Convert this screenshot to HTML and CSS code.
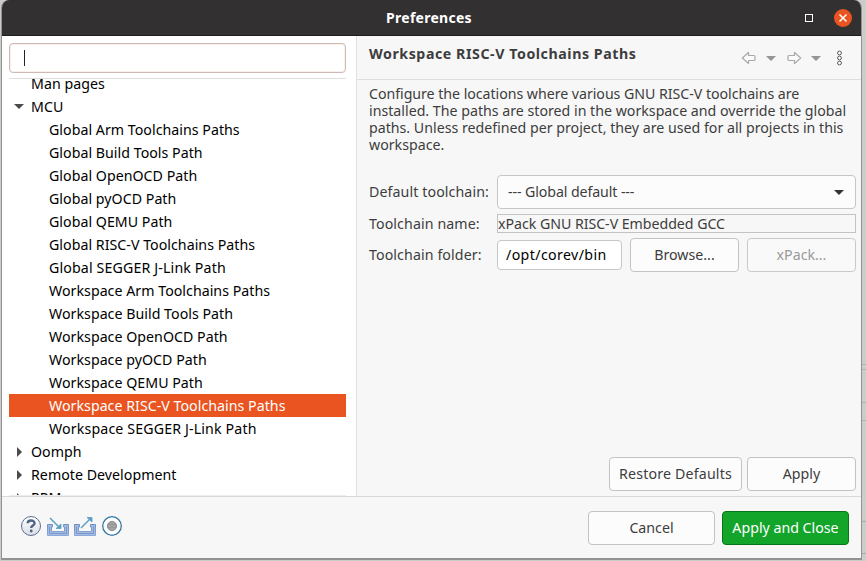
FILE: index.html
```html
<!DOCTYPE html>
<html lang="en">
<head>
<meta charset="utf-8">
<title>Preferences</title>
<link rel="stylesheet" href="styles.css">
</head>
<body>
<div class="window">
  <header class="titlebar">
    <h1>Preferences</h1>
    <div class="controls">
      <span class="maximize"></span>
      <svg class="close" width="18" height="18" viewBox="0 0 18 18"><circle cx="9" cy="9" r="9" fill="#e95420"/><path d="M5.5 5.5l7 7M12.500 5.500l-7 7" stroke="#fff" stroke-width="1.5"/></svg>
    </div>
  </header>
  <main class="panes">
    <aside class="sidebar">
      <div class="search"><span class="caret"></span></div>
      <div class="tree">
        <ul>
          <li class="top">Man pages</li>
          <li class="top open">MCU</li>
          <li>Global Arm Toolchains Paths</li>
          <li>Global Build Tools Path</li>
          <li>Global OpenOCD Path</li>
          <li>Global pyOCD Path</li>
          <li>Global QEMU Path</li>
          <li>Global RISC-V Toolchains Paths</li>
          <li class="segger">Global SEGGER J-Link Path</li>
          <li>Workspace Arm Toolchains Paths</li>
          <li>Workspace Build Tools Path</li>
          <li>Workspace OpenOCD Path</li>
          <li>Workspace pyOCD Path</li>
          <li>Workspace QEMU Path</li>
          <li class="selected">Workspace RISC-V Toolchains Paths</li>
          <li class="segger">Workspace SEGGER J-Link Path</li>
          <li class="top closed">Oomph</li>
          <li class="top closed">Remote Development</li>
          <li class="top closed">RPM</li>
        </ul>
      </div>
    </aside>
    <section class="page">
      <div class="heading">
        <h2>Workspace RISC-V Toolchains Paths</h2>
        <svg class="nav" width="104" height="18" viewBox="0 0 104 18">
          <g fill="#fafafa" stroke="#a9a9a9" stroke-width="1.2" stroke-linejoin="round">
            <path d="M1.300 9L7.500 3.500V6.500H13Q14 6.500 14 7.500V10.500Q14 11.500 13 11.500H7.500V14.500Z"/>
            <path d="M59.700 9L53.500 3.500V6.500H48Q47 6.500 47 7.500V10.500Q47 11.500 48 11.500H53.500V14.500Z"/>
          </g>
          <path d="M25 7h10l-5 5zM70 7h10l-5 5z" fill="#959595"/>
          <g fill="#fff" stroke="#555" stroke-width="1"><circle cx="98.500" cy="4" r="1.900"/><circle cx="98.500" cy="9" r="1.900"/><circle cx="98.500" cy="14" r="1.900"/></g>
        </svg>
      </div>
      <p class="description"><span class="tight">Configure the locations where various GNU RISC-V toolchains are</span><br>installed. The paths are stored in the workspace and override the global<br>paths. Unless redefined per project, they are used for all projects in this<br>workspace.</p>
      <div class="form">
        <label>Default toolchain:</label>
        <div class="select"><span>--- Global default ---</span><i></i></div>
        <label>Toolchain name:</label>
        <div class="readonly">xPack GNU RISC-V Embedded GCC</div>
        <label>Toolchain folder:</label>
        <div class="folder">
          <div class="input">/opt/corev/bin</div>
          <button>Browse...</button>
          <button disabled>xPack...</button>
        </div>
      </div>
      <div class="page-actions">
        <button class="restore">Restore Defaults</button>
        <button>Apply</button>
      </div>
    </section>
  </main>
  <footer class="footer">
    <svg class="tools" width="104" height="22" viewBox="0 0 104 22">
      <defs>
        <linearGradient id="disc" x2="0" y2="1"><stop stop-color="#fff"/><stop offset="1" stop-color="#d9dde5"/></linearGradient>
        <linearGradient id="tray" x2="0" y2="1"><stop stop-color="#6f8fc4"/><stop offset="1" stop-color="#8ba8da"/></linearGradient>
      </defs>
      <circle cx="11" cy="11" r="9.500" fill="url(#disc)" stroke="#5f6f90"/>
      <path d="M7.700 8.300C7.700 4.500 14.500 4.500 14.500 8.200C14.500 10.800 11.200 10.300 11.200 13" fill="none" stroke="#506385" stroke-width="2.400"/>
      <circle cx="11.200" cy="16" r="1.400" fill="#506385"/>
      <path d="M27.500 9.500H32.500V12H31.500V16.500H44.500V12H43.500V9.500H48.500V20.500H27.500Z" fill="#a4bce4" stroke="url(#tray)"/>
      <path d="M29.500 11.500V18.500H46.500V11.500" fill="none" stroke="#7a97c8"/>
      <path d="M54.500 9.500H59.500V12H58.500V16.500H71.500V12H70.500V9.500H75.500V20.500H54.500Z" fill="#a4bce4" stroke="url(#tray)"/>
      <path d="M56.500 11.500V18.500H73.500V11.500" fill="none" stroke="#7a97c8"/>
      <g fill="#5a9fc4" stroke="#5a9fc4"><path d="M30 3L39 12" stroke-width="1.500"/><path d="M36 13.500H41V9Z" stroke-width=".8"/><path d="M61 13L70 4" stroke-width="1.500"/><path d="M67 2.500H72V7Z" stroke-width=".8"/></g>
      <circle cx="92" cy="11" r="9.300" fill="#fbfdff" stroke="#3976a3" stroke-width="1.300"/>
      <circle cx="92" cy="11" r="4.600" fill="#a3a3a3" stroke="#8b8b8b"/><path d="M88 9.500h8M88 12.500h8" stroke="#959595"/>
    </svg>
    <div class="dialog-actions">
      <button class="cancel">Cancel</button>
      <button class="primary">Apply and Close</button>
    </div>
  </footer>
</div>
</body>
</html>
```
FILE: styles.css
```css
* { box-sizing: border-box; }
body {
  margin: 0;
  width: 866px;
  height: 561px;
  overflow: hidden;
  padding-left: 1px;
  background: linear-gradient(#b5b2ae, #b5b2ae) 861px 364px / 5px 1px no-repeat,
    linear-gradient(#b5b2ae, #b5b2ae) 861px 369px / 5px 1px no-repeat,
    linear-gradient(#b5b2ae, #b5b2ae) 861px 402px / 5px 1px no-repeat,
    linear-gradient(#b5b2ae, #b5b2ae) 861px 420px / 5px 1px no-repeat,
    linear-gradient(#aaa, #aaa) 861px 521px / 5px 1px no-repeat,
    linear-gradient(#aaa, #aaa) 861px 553px / 5px 1px no-repeat, #cdccca;
  font: 14.2px/17px "Noto Sans", sans-serif;
  color: #3d3d3d;
}
.window {
  width: 861px;
  height: 560px;
  border: solid #929292;
  border-width: 0 1px 2px;
  border-radius: 8px 8px 0 0;
  overflow: hidden;
  display: flex;
  flex-direction: column;
  background: #f7f7f7;
}
.titlebar {
  height: 36px;
  flex: none;
  display: grid;
  grid-template-columns: 1fr auto 1fr;
  align-items: center;
  background: #333031;
  border-bottom: 1px solid #1f1c1d;
  color: #fff;
}
h1 {
  grid-column: 2;
  margin: 0 0 0 -5px;
  font-size: 14px;
  line-height: 20px;
  letter-spacing: 0.27px;
}
.controls { display: flex; justify-content: flex-end; align-items: center; gap: 21px; padding-right: 9px; }
.maximize { width: 8px; height: 8px; border: 1px solid #fff; }
.panes { height: 461px; flex: none; display: flex; border-bottom: 1px solid #d9d9d9; }
.sidebar { width: 355px; flex: none; padding: 7px 10px 0 7px; background: #fff; border-right: 1px solid #e0e0e0; color: #000; }
.search { height: 30px; border: 1px solid #cdbab5; border-radius: 4px; padding: 6px 14px; box-shadow: inset 0 0 0 1px #fdf0ec; }
.caret { display: block; width: 1px; height: 16px; background: #222; }
.tree { margin-top: 5px; height: 418px; overflow: hidden; border-top: 1px solid #dedede; border-bottom: 1px solid #ececec; }
ul { margin: -7px 0 0; padding: 0; list-style: none; letter-spacing: 0.03px; }
li { height: 23px; line-height: 23px; padding-left: 40px; white-space: nowrap; }
.segger { letter-spacing: 0.14px; }
.top { padding-left: 22px; display: flex; align-items: center; }
.open, .closed { padding-left: 5px; }
.open::before { content: ""; border: 5px solid transparent; border-top-color: #4a4a4a; border-bottom: 0; margin-right: 7px; }
.closed::before { content: ""; border: 5px solid transparent; border-left-color: #4a4a4a; border-right: 0; margin: 0 9px 0 3px; }
.selected { background: #e95420; color: #fff; }
.page { flex: 1; min-width: 0; display: flex; flex-direction: column; }
.heading { height: 44px; flex: none; display: flex; justify-content: space-between; padding: 9px 16px 0 12px; border-bottom: 1px solid #dedede; }
h2 { margin: 0; font-size: 14.2px; line-height: 18px; letter-spacing: 0.56px; white-space: nowrap; }
.nav { margin-top: 4px; }
.description { margin: 5px 0 0 12px; white-space: nowrap; }
.tight { letter-spacing: -0.04px; }
.form { margin: 22px 5px 0 12px; display: grid; grid-template-columns: 128px 1fr; grid-template-rows: 34px 21px 34px; row-gap: 4px; align-items: center; }
label { letter-spacing: 0.1px; padding-bottom: 1px; }
.select { height: 34px; display: flex; justify-content: space-between; align-items: center; padding: 0 11px 0 10px; background: #fcfcfc; border: 1px solid #c6c6c6; border-radius: 4px; }
.select span { padding-bottom: 2px; letter-spacing: -0.1px; }
.select i { border: 5px solid transparent; border-top-color: #333; border-bottom: 0; }
.readonly { height: 19px; line-height: 18px; border: 1px solid #c3c3c3; letter-spacing: -0.04px; }
.folder { display: flex; align-items: center; gap: 8px; }
.input { width: 125px; height: 30px; line-height: 28px; padding-left: 8px; border: 1px solid #c6c6c6; border-radius: 4px; background: #fff; color: #000; letter-spacing: 0.38px; }
button { width: 109px; height: 34px; flex: none; padding: 0 0 2px; border: 1px solid #c3c3c3; border-radius: 4px; background: #fcfcfc; font: inherit; color: inherit; white-space: nowrap; }
button:disabled { color: #999; background: #f9f9f9; border-color: #c9c9c9; }
.page-actions { margin: auto 5px 5px 0; display: flex; justify-content: flex-end; gap: 5px; }
.restore { width: 133px; letter-spacing: 0.17px; }
.footer { flex: 1; display: flex; justify-content: space-between; padding: 14px 12px 0 18px; }
.tools { margin-top: 4px; }
.dialog-actions { display: flex; gap: 7px; }
.cancel { width: 127px; }
.primary { width: 127px; background: #13a52a; border-color: #087519; color: #fff; }
```
